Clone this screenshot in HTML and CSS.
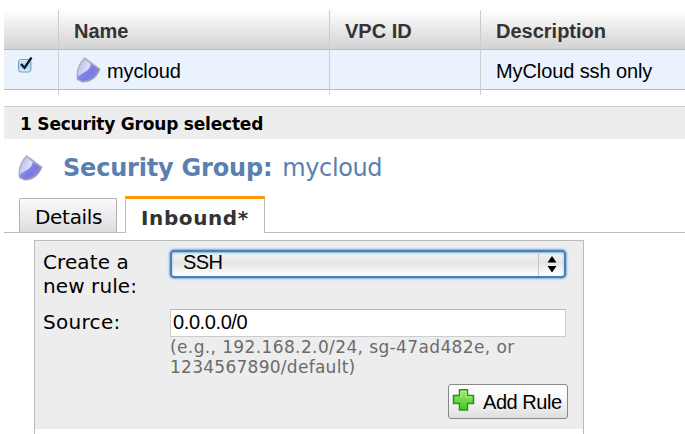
FILE: index.html
```html
<!DOCTYPE html>
<html lang="en">
<head>
<meta charset="utf-8">
<title>Security Groups</title>
<link rel="stylesheet" href="styles.css">
</head>
<body>
<svg width="0" height="0" class="defs" aria-hidden="true">
  <defs>
    <linearGradient id="rim" x1="0" y1="0" x2="1" y2="1">
      <stop offset="0" stop-color="#b9b7c6"/><stop offset="1" stop-color="#9592aa"/>
    </linearGradient>
    <linearGradient id="face" x1="0" y1="0" x2="1" y2="1">
      <stop offset="0" stop-color="#b4b5f5"/><stop offset=".6" stop-color="#7a79e6"/><stop offset="1" stop-color="#8886ec"/>
    </linearGradient>
    <linearGradient id="shine" x1="0" y1="0" x2="1" y2="0.6">
      <stop offset="0" stop-color="#b3b3ee"/><stop offset="1" stop-color="#e6e8fd"/>
    </linearGradient>
    <symbol id="shield" viewBox="0 0 26 28">
      <path d="M9.500 1Q17 6.500 25.500 13Q20 26.500 7.500 26.500L2 24Q-.5 11 9.500 1Z" fill="url(#rim)"/>
      <path d="M9.700 3.300Q16.500 8.500 23.700 14Q18 25 7.500 25L3 22.700Q1.700 11.500 9.700 3.300Z" fill="url(#face)"/>
      <path d="M9.700 3.300L15.500 7.700Q16 11 11.500 15Q7 17.500 2.800 20.500Q2 11 9.700 3.300Z" fill="url(#shine)"/>
    </symbol>
    <linearGradient id="green" x1="0" y1="0" x2="0" y2="1">
      <stop offset="0" stop-color="#a2ec65"/><stop offset="1" stop-color="#43c52c"/>
    </linearGradient>
    <linearGradient id="box" x1="0" y1="0" x2="0" y2="1">
      <stop offset="0" stop-color="#dcecf8"/><stop offset=".5" stop-color="#a9d3f3"/><stop offset="1" stop-color="#c8f2ff"/>
    </linearGradient>
  </defs>
</svg>
<div class="grid">
  <div class="col check-col">
    <div class="head"></div>
    <div class="cell"><svg class="check" width="18" height="18" viewBox="0 0 18 18"><rect x="1.500" y="4.500" width="12.500" height="12.500" rx="2.500" fill="url(#box)" stroke="#8299ae"/><path d="M4 9L7.500 12.800L14.500 2.500" fill="none" stroke="#08162c" stroke-width="2.300"/></svg></div>
  </div>
  <div class="col name-col">
    <div class="head"><span>Name</span></div>
    <div class="cell"><svg class="shield" width="26" height="28"><use href="#shield"/></svg><span class="group-name">mycloud</span></div>
  </div>
  <div class="col vpc-col">
    <div class="head"><span>VPC ID</span></div>
    <div class="cell"></div>
  </div>
  <div class="col desc-col">
    <div class="head"><span>Description</span></div>
    <div class="cell"><span class="group-desc">MyCloud ssh only</span></div>
  </div>
</div>
<div class="selected"><span>1 Security Group selected</span></div>
<h1 class="title"><svg class="shield" width="26" height="28"><use href="#shield"/></svg><b>Security Group:</b><span>mycloud</span></h1>
<div class="tabs">
  <div class="tab"><span>Details</span></div>
  <div class="tab active"><span>Inbound*</span></div>
</div>
<div class="panel">
  <div class="form">
    <div class="row rule-row">
      <div class="label">Create a<br>new rule:</div>
      <div class="select"><span>SSH</span><div class="stepper"><svg width="10" height="18" viewBox="0 0 10 18"><path d="M.5 7.500L5 1L9.500 7.500ZM.5 11L5 17.500L9.500 11Z" fill="#000"/></svg></div></div>
    </div>
    <div class="row">
      <div class="label source">Source:</div>
      <div class="field">
        <div class="input"><span>0.0.0.0/0</span></div>
        <div class="hint">(e.g., 192.168.2.0/24, sg-47ad482e, or<br><span>1234567890/default)</span></div>
      </div>
    </div>
    <div class="actions"><div class="button"><svg width="24" height="24" viewBox="0 0 24 24"><path d="M7.500 1.800H15.500V7.500H21.500V15.500H15.500V22H7.500V15.500H1.500V7.500H7.500Z" fill="url(#green)" stroke="#27941e" stroke-width="1.500"/><path d="M9 9V3.300H14V9H20" fill="none" stroke="#b9f48a"/></svg><span>Add Rule</span></div></div>
  </div>
</div>
</body>
</html>
```
FILE: styles.css
```css
* { box-sizing: border-box; }
html, body { margin: 0; height: 434px; overflow: hidden; background: #fff; }
body { padding: 10px 0 0 4px; color: #000; font: 20px "Liberation Sans", Arial, sans-serif; white-space: nowrap; display: flow-root; }
svg { flex: none; }
.defs { position: absolute; }
.grid { display: flex; height: 85px; }
.col { border-left: 1px solid #ccc; height: 85px; }
.check-col { width: 54px; border-left: 0; }
.name-col { width: 271px; }
.vpc-col { width: 151px; }
.desc-col { flex: 1; }
.head { height: 40px; padding: 4px 0 0 15px; display: flex; align-items: center; font-weight: bold; color: #333; background: linear-gradient(#fff, #d2d2d2); border-bottom: 1px solid #b9b9b9; }
.cell { height: 40px; display: flex; align-items: center; padding: 4px 0 0 15px; background: #eaf2fe; border-bottom: 1px solid #bbb; }
.check-col .cell { align-items: flex-start; padding: 5px 0 0 13px; }
.name-col .cell { padding-left: 16px; }
.name-col .shield { margin: 0 6px 3px 0; }
.group-name { letter-spacing: -0.1px; }
.group-desc { letter-spacing: -0.1px; }
.selected { margin-top: 11px; height: 33px; padding: 2px 0 0 16px; display: flex; align-items: center; background: #ededed; border-top: 1px solid #ccc; font: bold 17px "DejaVu Sans", Verdana, sans-serif; letter-spacing: -0.2px; }
.title { margin: 0; height: 57px; padding: 0 0 0 13px; display: flex; align-items: center; color: #5b80b0; font: 24px "DejaVu Sans", Verdana, sans-serif; }
.title .shield { margin-top: 1px; }
.title b { margin-left: 20px; letter-spacing: -0.2px; }
.title span { margin-left: 10px; letter-spacing: -0.4px; }
.tabs { height: 37px; padding-left: 15px; display: flex; align-items: flex-end; border-bottom: 1px solid #bbb; font: 20px "DejaVu Sans", Verdana, sans-serif; }
.tab { width: 98px; height: 34px; margin-right: 8px; padding: 6px 0 0 15px; border: 1px solid #b0b0b0; border-bottom: 0; border-radius: 2px 2px 0 0; background: linear-gradient(#fafafa, #ddd); letter-spacing: -0.3px; }
.active { width: 140px; height: 37px; margin-bottom: -1px; padding: 7px 0 0 15px; border: 1px solid #bbb; border-top: 3px solid #f90; border-bottom: 0; border-radius: 0; background: #fff; color: #333; font-weight: bold; letter-spacing: 0.6px; }
.panel { width: 550px; height: 200px; margin: 7px 0 0 30px; border: 1px solid #bbb; border-bottom: 0; }
.form { height: 188px; background: #ededed; padding: 9px 15px 0 8px; }
.row { display: flex; font: 20px/24px "DejaVu Sans", Verdana, sans-serif; }
.rule-row { height: 59px; }
.label { width: 127px; letter-spacing: 0.1px; }
.source { padding-top: 1px; letter-spacing: 0.3px; }
.select { width: 396px; height: 28px; padding-left: 11px; display: flex; align-items: center; justify-content: space-between; border: 2px solid #4a7eb5; border-radius: 4px; background: linear-gradient(#f4f4f4, #e5e5e5 45%, #fff); box-shadow: 0 0 2px 1px #79aee2, inset 0 1px 2px #79aee2; font: 20px/24px "Liberation Sans", Arial, sans-serif; letter-spacing: -0.6px; }
.select span { margin-top: -4px; }
.stepper { width: 26px; height: 24px; border-left: 1px solid #c5c5c5; display: flex; align-items: center; justify-content: center; }
.input { width: 396px; height: 28px; padding-left: 2px; background: #fff; border: 1px solid #ccc; border-top-color: #b5b5b5; font: 20px/25px "Liberation Sans", Arial, sans-serif; letter-spacing: -0.4px; }
.hint { color: #6b6b6b; font-size: 17px; line-height: 20px; letter-spacing: 0.38px; }
.hint span { letter-spacing: 0.27px; }
.actions { display: flex; justify-content: flex-end; padding: 7px 0 0; }
.button { width: 120px; height: 35px; padding-left: 3px; display: flex; align-items: center; border: 1px solid #888; border-radius: 3px; background: linear-gradient(#fff, #f7f7f7 45%, #dedede); letter-spacing: -0.45px; }
.button svg { margin-top: -3px; }
.button span { margin: 2px 0 0 7px; }
```
